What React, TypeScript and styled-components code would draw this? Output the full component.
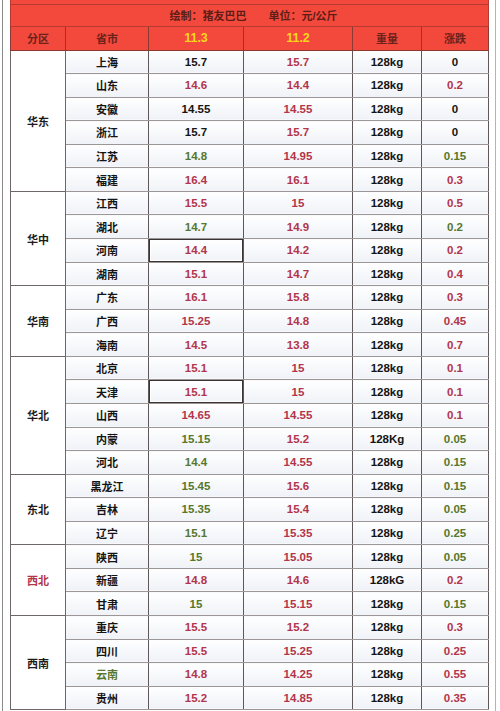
import React from "react";
import styled, { createGlobalStyle } from "styled-components";

const GlobalStyle = createGlobalStyle`
  html, body {
    margin: 0;
    padding: 0;
    background: #ffffff;
  }
  body {
    font-family: "Liberation Sans", "Noto Sans CJK SC", sans-serif;
  }
`;

type Tone = "k" | "r" | "g";

const toneColor: Record<Tone, string> = {
  k: "#141414",
  r: "#b2354b",
  g: "#56772e",
};

interface PriceRow {
  province: string;
  provinceTone?: Tone;
  today: string;
  todayTone: Tone;
  yesterday: string;
  weight: string;
  change: string;
  changeTone: Tone;
  boxed?: boolean;
}

interface Group {
  region: string;
  regionTone?: Tone;
  rows: PriceRow[];
}

const r = (
  province: string,
  today: string,
  todayTone: Tone,
  yesterday: string,
  change: string,
  changeTone: Tone,
  extra: Partial<PriceRow> = {}
): PriceRow => ({
  province,
  today,
  todayTone,
  yesterday,
  weight: "128kg",
  change,
  changeTone,
  ...extra,
});

const groups: Group[] = [
  {
    region: "华东",
    rows: [
      r("上海", "15.7", "k", "15.7", "0", "k"),
      r("山东", "14.6", "r", "14.4", "0.2", "r"),
      r("安徽", "14.55", "k", "14.55", "0", "k"),
      r("浙江", "15.7", "k", "15.7", "0", "k"),
      r("江苏", "14.8", "g", "14.95", "0.15", "g"),
      r("福建", "16.4", "r", "16.1", "0.3", "r"),
    ],
  },
  {
    region: "华中",
    rows: [
      r("江西", "15.5", "r", "15", "0.5", "r"),
      r("湖北", "14.7", "g", "14.9", "0.2", "g"),
      r("河南", "14.4", "r", "14.2", "0.2", "r", { boxed: true }),
      r("湖南", "15.1", "r", "14.7", "0.4", "r"),
    ],
  },
  {
    region: "华南",
    rows: [
      r("广东", "16.1", "r", "15.8", "0.3", "r"),
      r("广西", "15.25", "r", "14.8", "0.45", "r"),
      r("海南", "14.5", "r", "13.8", "0.7", "r"),
    ],
  },
  {
    region: "华北",
    rows: [
      r("北京", "15.1", "r", "15", "0.1", "r"),
      r("天津", "15.1", "r", "15", "0.1", "r", { boxed: true }),
      r("山西", "14.65", "r", "14.55", "0.1", "r"),
      r("内蒙", "15.15", "g", "15.2", "0.05", "g", { weight: "128Kg" }),
      r("河北", "14.4", "g", "14.55", "0.15", "g"),
    ],
  },
  {
    region: "东北",
    rows: [
      r("黑龙江", "15.45", "g", "15.6", "0.15", "g"),
      r("吉林", "15.35", "g", "15.4", "0.05", "g"),
      r("辽宁", "15.1", "g", "15.35", "0.25", "g"),
    ],
  },
  {
    region: "西北",
    regionTone: "r",
    rows: [
      r("陕西", "15", "g", "15.05", "0.05", "g"),
      r("新疆", "14.8", "r", "14.6", "0.2", "r", { weight: "128kG" }),
      r("甘肃", "15", "g", "15.15", "0.15", "g"),
    ],
  },
  {
    region: "西南",
    rows: [
      r("重庆", "15.5", "r", "15.2", "0.3", "r"),
      r("四川", "15.5", "r", "15.25", "0.25", "r"),
      r("云南", "14.8", "r", "14.25", "0.55", "r", { provinceTone: "g" }),
      r("贵州", "15.2", "r", "14.85", "0.35", "r"),
    ],
  },
];

const Page = styled.div`
  width: 500px;
  height: 711px;
  overflow: hidden;
  background: #ffffff;
`;

const Frame = styled.div`
  width: 485px;
  height: 711px;
  margin-left: 2px;
  padding-left: 7px;
  border-left: 1px solid #8a8a8a;
  border-right: 1px solid #b4b4b4;
`;

const Table = styled.table`
  width: 478px;
  table-layout: fixed;
  border-collapse: collapse;
  font-weight: bold;
  text-align: center;
`;

const TopRow = styled.tr`
  height: 4px;

  td {
    background: #f3493d;
    border: 1px solid #b53a32;
    border-top: none;
    padding: 0;
  }
`;

const TitleCell = styled.td`
  height: 21px;
  padding: 0 0 0 8px;
  background: #f3493d;
  color: #5e1d16;
  font-size: 11px;
  border: 1px solid #b53a32;
  white-space: pre;
`;

const HeadCell = styled.th<{ $yellow?: boolean }>`
  height: 23px;
  padding: 0;
  background: #f3493d;
  color: ${({ $yellow }) => ($yellow ? "#f7d51c" : "#6a221b")};
  font-size: ${({ $yellow }) => ($yellow ? "12.5px" : "11px")};
  font-weight: bold;
  border: 1px solid #8a3a33;
`;

const DataRow = styled.tr`
  height: 23.57px;
`;

const RegionCell = styled.td<{ $tone?: Tone }>`
  padding: 0;
  background: #ffffff;
  color: ${({ $tone }) => ($tone ? toneColor[$tone] : "#1c1c1c")};
  font-size: 11px;
  border: 1px solid #6e6767;
`;

const Cell = styled.td<{ $tone: Tone; $boxed?: boolean }>`
  padding: 0;
  background: linear-gradient(#ffffff, #eff2f7);
  color: ${({ $tone }) => toneColor[$tone]};
  font-size: 11.5px;
  border-left: 1px solid #5e5858;
  border-right: 1px solid #5e5858;
  border-top: 1px solid #9c9696;
  border-bottom: 1px solid #9c9696;
  box-shadow: ${({ $boxed }) =>
    $boxed ? "inset 0 0 0 1px #3a3434, inset 0 0 0 2px #ffffff" : "none"};
`;

const CnCell = styled(Cell)`
  font-size: 11px;
`;

export default function App() {
  return (
    <Page>
      <GlobalStyle />
      <Frame>
        <Table>
          <colgroup>
            <col style={{ width: 55 }} />
            <col style={{ width: 83 }} />
            <col style={{ width: 95 }} />
            <col style={{ width: 109 }} />
            <col style={{ width: 69 }} />
            <col style={{ width: 67 }} />
          </colgroup>
          <tbody>
            <TopRow>
              <td colSpan={6} />
            </TopRow>
            <tr>
              <TitleCell colSpan={6}>{"绘制：猪友巴巴　　单位：元/公斤"}</TitleCell>
            </tr>
            <tr>
              <HeadCell>分区</HeadCell>
              <HeadCell>省市</HeadCell>
              <HeadCell $yellow>11.3</HeadCell>
              <HeadCell $yellow>11.2</HeadCell>
              <HeadCell>重量</HeadCell>
              <HeadCell>涨跌</HeadCell>
            </tr>
            {groups.map((group) =>
              group.rows.map((row, i) => (
                <DataRow key={group.region + row.province}>
                  {i === 0 && (
                    <RegionCell rowSpan={group.rows.length} $tone={group.regionTone}>
                      {group.region}
                    </RegionCell>
                  )}
                  <CnCell $tone={row.provinceTone ?? "k"}>{row.province}</CnCell>
                  <Cell $tone={row.todayTone} $boxed={row.boxed}>
                    {row.today}
                  </Cell>
                  <Cell $tone="r">{row.yesterday}</Cell>
                  <Cell $tone="k">{row.weight}</Cell>
                  <Cell $tone={row.changeTone}>{row.change}</Cell>
                </DataRow>
              ))
            )}
          </tbody>
        </Table>
      </Frame>
    </Page>
  );
}
